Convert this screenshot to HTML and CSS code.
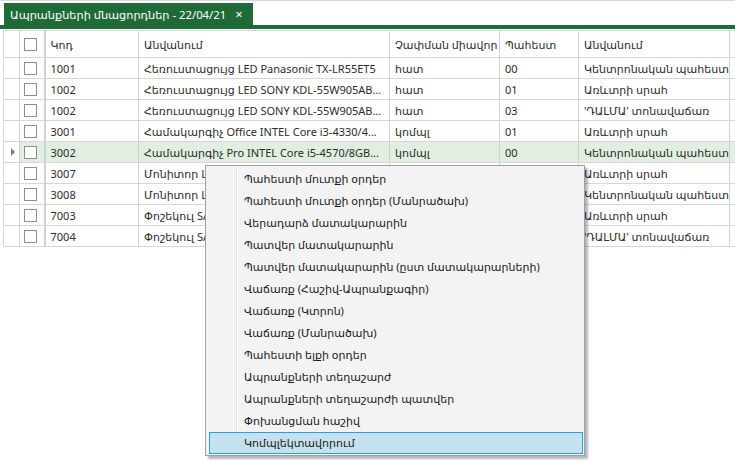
FILE: index.html
```html
<!DOCTYPE html>
<html lang="hy">
<head>
<meta charset="utf-8">
<title>Ապրանքների մնացորդներ</title>
<link rel="stylesheet" href="styles.css">
</head>
<body>
<div class="app">
  <div class="tabstrip">
    <div class="tab"><span class="tab-title">Ապրանքների մնացորդներ - 22/04/21</span><span class="tab-close">×</span></div>
  </div>
  <div class="tabline"></div>
  <div class="gridwrap">
    <table class="grid">
      <colgroup>
        <col class="c-ind"><col class="c-chk"><col class="c-code"><col class="c-name"><col class="c-unit"><col class="c-store"><col class="c-sname"><col class="c-rest">
      </colgroup>
      <thead>
        <tr>
          <th class="ind"></th>
          <th class="chk"><span class="box"></span></th>
          <th>Կոդ</th>
          <th>Անվանում</th>
          <th>Չափման միավոր</th>
          <th>Պահեստ</th>
          <th>Անվանում</th>
          <th class="rest"><span class="orange"></span></th>
        </tr>
      </thead>
      <tbody>
        <tr><td class="ind"></td><td class="chk"><span class="box"></span></td><td>1001</td><td>Հեռուստացույց LED Panasonic TX-LR55ET5</td><td>հատ</td><td>00</td><td>Կենտրոնական պահեստ</td><td class="rest"></td></tr>
        <tr><td class="ind"></td><td class="chk"><span class="box"></span></td><td>1002</td><td>Հեռուստացույց LED SONY KDL-55W905AB...</td><td>հատ</td><td>01</td><td>Առևտրի սրահ</td><td class="rest"></td></tr>
        <tr><td class="ind"></td><td class="chk"><span class="box"></span></td><td>1002</td><td>Հեռուստացույց LED SONY KDL-55W905AB...</td><td>հատ</td><td>03</td><td>'ԴԱԼՄԱ' տոնավաճառ</td><td class="rest"></td></tr>
        <tr><td class="ind"></td><td class="chk"><span class="box"></span></td><td>3001</td><td>Համակարգիչ Office INTEL Core i3-4330/4...</td><td>կոմպլ</td><td>01</td><td>Առևտրի սրահ</td><td class="rest"></td></tr>
        <tr class="sel"><td class="ind"><span class="arrow"></span></td><td class="chk"><span class="box"></span></td><td>3002</td><td>Համակարգիչ Pro INTEL Core i5-4570/8GB...</td><td>կոմպլ</td><td>00</td><td>Կենտրոնական պահեստ</td><td class="rest"></td></tr>
        <tr><td class="ind"></td><td class="chk"><span class="box"></span></td><td>3007</td><td>Մոնիտոր LED DELL U2414H</td><td>հատ</td><td>01</td><td>Առևտրի սրահ</td><td class="rest"></td></tr>
        <tr><td class="ind"></td><td class="chk"><span class="box"></span></td><td>3008</td><td>Մոնիտոր LED LG 24MP57HQ</td><td>հատ</td><td>00</td><td>Կենտրոնական պահեստ</td><td class="rest"></td></tr>
        <tr><td class="ind"></td><td class="chk"><span class="box"></span></td><td>7003</td><td>Փոշեկուլ SAMSUNG SC4520</td><td>հատ</td><td>01</td><td>Առևտրի սրահ</td><td class="rest"></td></tr>
        <tr><td class="ind"></td><td class="chk"><span class="box"></span></td><td>7004</td><td>Փոշեկուլ SAMSUNG SC4520</td><td>հատ</td><td>03</td><td>'ԴԱԼՄԱ' տոնավաճառ</td><td class="rest"></td></tr>
      </tbody>
    </table>
  </div>

  <ul class="menu">
    <li>Պահեստի մուտքի օրդեր</li>
    <li>Պահեստի մուտքի օրդեր (Մանրածախ)</li>
    <li>Վերադարձ մատակարարին</li>
    <li>Պատվեր մատակարարին</li>
    <li>Պատվեր մատակարարին (ըստ մատակարարների)</li>
    <li>Վաճառք (Հաշիվ-Ապրանքագիր)</li>
    <li>Վաճառք (Կտրոն)</li>
    <li>Վաճառք (Մանրածախ)</li>
    <li>Պահեստի ելքի օրդեր</li>
    <li>Ապրանքների տեղաշարժ</li>
    <li>Ապրանքների տեղաշարժի պատվեր</li>
    <li>Փոխանցման հաշիվ</li>
    <li class="hot">Կոմպլեկտավորում</li>
  </ul>
</div>
</body>
</html>
```

FILE: styles.css
```css
html, body {
  margin: 0;
  padding: 0;
  background: #ffffff;
}

body {
  font-family: "Noto Sans", "DejaVu Sans", sans-serif;
  font-size: 11px;
  color: #2b2b2b;
}

.app {
  position: relative;
  width: 735px;
  height: 469px;
  overflow: hidden;
  border-top: 1px solid #d9d9d9;
  box-sizing: border-box;
}

.tabstrip {
  display: flex;
  padding: 2px 0 0 4px;
  height: 22px;
}

.tab {
  display: flex;
  align-items: center;
  height: 22px;
  box-sizing: border-box;
  padding: 0 10px 0 6px;
  background: #1f6b38;
  color: #ffffff;
}

.tab-title {
  font-size: 11.3px;
  white-space: nowrap;
}

.tab-close {
  margin-left: 9px;
  font-size: 13px;
  line-height: 1;
}

.tabline {
  height: 4px;
  background: #1f6b38;
}

.gridwrap {
  padding: 1px 0 0 3px;
}

.grid {
  border-collapse: collapse;
  table-layout: fixed;
  width: 760px;
}

.c-ind { width: 16px; }
.c-chk { width: 25px; }
.c-code { width: 94px; }
.c-name { width: 251px; }
.c-unit { width: 110px; }
.c-store { width: 79px; }
.c-sname { width: 151px; }
.c-rest { width: 34px; }

.grid th,
.grid td {
  border-left: 1px solid #ccd3dd;
  border-bottom: 1px solid #d7d7d7;
  padding: 0 0 0 5px;
  text-align: left;
  font-weight: normal;
  white-space: nowrap;
  overflow: hidden;
  text-overflow: clip;
  vertical-align: middle;
}

.grid th {
  height: 26px;
  border-top: 1px solid #d7d7d7;
  color: #2b2b2b;
}

.grid td {
  height: 20px;
}

.grid .ind {
  border-left: 1px solid #d7d7d7;
  padding: 0;
}

.grid .chk {
  padding: 0 0 0 4px;
  border-right: 1px solid #ccd3dd;
}

.grid td.chk + td,
.grid th.chk + th {
  border-left: 2px solid #ccd3dd;
}

.box {
  display: block;
  width: 11px;
  height: 11px;
  border: 1px solid #8f8f8f;
  background: #ffffff;
}

.sel td {
  background: #e1efe0;
}

.sel td.ind {
  background: #ffffff;
}

.arrow {
  display: block;
  width: 0;
  height: 0;
  margin-left: 7px;
  border-top: 4px solid transparent;
  border-bottom: 4px solid transparent;
  border-left: 4px solid #7a7a7a;
}

.orange {
  display: block;
  width: 4px;
  height: 10px;
  background: #f7c98a;
}

.menu {
  position: absolute;
  left: 205px;
  top: 164px;
  width: 374px;
  margin: 0;
  padding: 2px 1px 1px 3px;
  list-style: none;
  background: #f3f3f3 linear-gradient(to right, transparent 30px, #e2e2e2 30px, #e2e2e2 31px, #ffffff 31px, #ffffff 32px, transparent 32px);
  border: 1px solid #a0a0a0;
  box-shadow: 3px 3px 2px rgba(0, 0, 0, 0.28);
  color: #1a1a1a;
}

.menu li {
  height: 22px;
  line-height: 22px;
  padding-left: 35px;
  box-sizing: border-box;
  white-space: nowrap;
}

.menu li.hot {
  background: #c5e0ef;
  border: 1px solid #2a9fdc;
  line-height: 20px;
  padding-left: 34px;
}
```
